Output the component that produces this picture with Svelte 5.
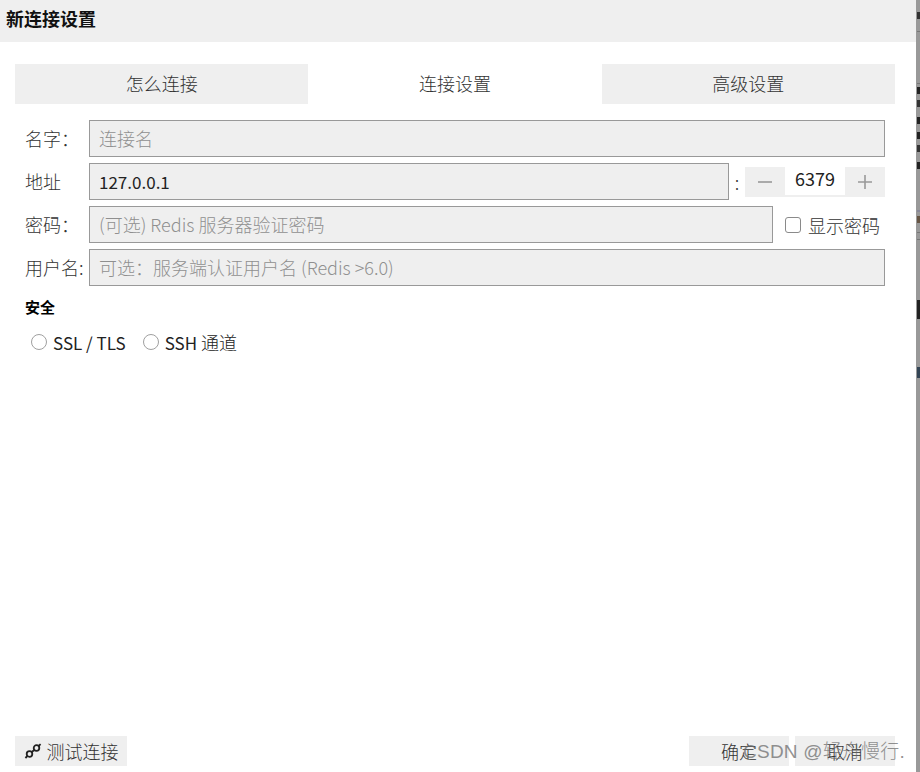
<script>
    let host = "127.0.0.1";
    let port = 6379;
    let showPassword = false;
    const tabs = ["怎么连接", "连接设置", "高级设置"];

    // bits of the window behind that show along the right edge
    const marks = [
        { top: 12, height: 7, color: "#333" },
        { top: 31, height: 1, color: "#777" },
        { top: 83, height: 1, color: "#777" },
        { top: 87, height: 7, color: "#222" },
        { top: 100, height: 7, color: "#333" },
        { top: 117, height: 7, color: "#222" },
        { top: 132, height: 7, color: "#222" },
        { top: 145, height: 7, color: "#333" },
        { top: 162, height: 7, color: "#222" },
        { top: 210, height: 2, color: "#889" },
        { top: 216, height: 7, color: "#654" },
        { top: 232, height: 1, color: "#777" },
        { top: 239, height: 1, color: "#777" },
        { top: 300, height: 19, color: "#222" },
        { top: 367, height: 11, color: "#345" }
    ];
</script>

<div class="page">
    <div class="dialog">
        <header class="title">新连接设置</header>

        <nav class="tabs">
            {#each tabs as tab, i}
                <div class="tab" class:active={i === 1}>{tab}</div>
            {/each}
        </nav>

        <form class="form">
            <div class="row">
                <span class="label">名字：</span>
                <input class="field" placeholder="连接名" />
            </div>
            <div class="row">
                <span class="label">地址</span>
                <input class="field host" bind:value={host} />
                <span class="colon">:</span>
                <div class="spin">
                    <button type="button" class="step" aria-label="减少">
                        <svg width="14" height="14" viewBox="0 0 14 14"><path d="M0 7h14" /></svg>
                    </button>
                    <span class="port">{port}</span>
                    <button type="button" class="step" aria-label="增加">
                        <svg width="14" height="14" viewBox="0 0 14 14"><path d="M0 7h14M7 0v14" /></svg>
                    </button>
                </div>
            </div>
            <div class="row">
                <span class="label">密码：</span>
                <input class="field" placeholder="(可选) Redis 服务器验证密码" />
                <label class="show">
                    <input type="checkbox" bind:checked={showPassword} />
                    <span>显示密码</span>
                </label>
            </div>
            <div class="row">
                <span class="label">用户名:</span>
                <input class="field" placeholder="可选：服务端认证用户名 (Redis >6.0)" />
            </div>

            <div class="section">安全</div>
            <div class="radios">
                <label><input type="radio" name="secure" /><span class="latin">SSL / TLS</span></label>
                <label><input type="radio" name="secure" /><span><span class="latin">SSH</span> 通道</span></label>
            </div>
        </form>

        <footer class="actions">
            <button type="button" class="btn test">
                <svg width="18" height="18" viewBox="0 0 18 18" fill="none" stroke="#222" stroke-width="1.8">
                    <circle cx="5.5" cy="12" r="2.8" />
                    <circle cx="12.5" cy="6" r="2.8" />
                    <path d="M3.4 14L1.4 16M7.6 10.2l2.8 -2.4M14.6 4L16.6 2.2" />
                </svg>
                测试连接
            </button>
            <div class="right">
                <button type="button" class="btn ok">确定</button>
                <button type="button" class="btn cancel">取消</button>
            </div>
            <span class="watermark">CSDN @轻舟慢行.</span>
        </footer>
    </div>
    <div class="edge">
        {#each marks as m}
            <i style="top:{m.top}px;height:{m.height}px;background:{m.color}"></i>
        {/each}
    </div>
</div>

<style>
    :global(body) {
        margin: 0;
        background: #fff;
    }

    .page {
        display: flex;
        width: 920px;
        height: 772px;
        overflow: hidden;
        font-family: "Noto Sans CJK SC", "Liberation Sans", sans-serif;
        font-size: 18px;
        font-weight: 300;
        color: #333;
    }

    .dialog {
        width: 916px;
        display: flex;
        flex-direction: column;
    }

    .edge {
        position: relative;
        width: 4px;
        background: #999;
    }

    .edge i {
        position: absolute;
        left: 1px;
        right: 0;
    }

    .title {
        height: 42px;
        line-height: 36px;
        padding-left: 6px;
        background: #efefef;
        color: #111;
        font-weight: 700;
    }

    .tabs {
        display: flex;
        margin: 22px 21px 0 15px;
    }

    .tab {
        flex: 1;
        height: 40px;
        line-height: 38px;
        text-align: center;
        background: #efefef;
    }

    .tab.active {
        background: #fff;
    }

    .form {
        flex: 1;
        display: flex;
        flex-direction: column;
        gap: 6px;
        padding: 16px 31px 0 25px;
    }

    .row {
        display: flex;
        align-items: center;
        height: 37px;
    }

    .label {
        width: 64px;
        flex: none;
        padding-bottom: 2px;
        white-space: nowrap;
    }

    .field {
        flex: 1;
        min-width: 0;
        height: 37px;
        box-sizing: border-box;
        padding: 0 9px 2px;
        border: 1px solid #999;
        background: #efefef;
        font: inherit;
        color: #222;
        outline: none;
    }

    .field.host {
        font-size: 17px;
        font-weight: 400;
        padding-bottom: 0;
    }

    .field::placeholder {
        color: #8f8f8f;
    }

    .colon {
        width: 16px;
        text-align: center;
    }

    .spin {
        display: flex;
        height: 30px;
        width: 140px;
        background: #efefef;
    }

    .step {
        width: 40px;
        border: none;
        background: none;
        padding: 0;
        display: flex;
        align-items: center;
        justify-content: center;
    }

    .step path {
        stroke: #999;
        stroke-width: 1.6;
        fill: none;
    }

    .port {
        width: 60px;
        height: 28px;
        line-height: 23px;
        text-align: center;
        background: #fff;
        color: #222;
        font-weight: 400;
    }

    .show {
        display: flex;
        align-items: center;
        gap: 7px;
        width: 112px;
        padding-left: 12px;
        box-sizing: border-box;
        white-space: nowrap;
    }

    .show input,
    .radios input {
        appearance: none;
        width: 16px;
        height: 16px;
        margin: 0;
        box-sizing: border-box;
        border: 1px solid #8a8a8a;
        background: #fff;
    }

    .show input {
        border-radius: 3px;
    }

    .section {
        margin-top: 4px;
        font-size: 15px;
        font-weight: 700;
        color: #000;
    }

    .radios {
        display: flex;
        gap: 17px;
        padding-left: 6px;
        margin-top: 6px;
        color: #222;
    }

    .radios label {
        display: flex;
        align-items: center;
        gap: 6px;
    }

    .radios input {
        border-color: #a0a0a0;
        border-radius: 50%;
    }

    .latin {
        font-size: 17px;
        font-weight: 400;
    }

    .actions {
        position: relative;
        display: flex;
        justify-content: space-between;
        margin: 0 21px 6px 15px;
    }

    .right {
        display: flex;
        gap: 6px;
    }

    .btn {
        height: 30px;
        border: none;
        background: #efefef;
        font: inherit;
        color: #333;
        padding: 0;
    }

    .test {
        width: 112px;
        display: flex;
        align-items: center;
        justify-content: center;
        gap: 5px;
    }

    .ok,
    .cancel {
        width: 100px;
    }

    .watermark {
        position: absolute;
        right: -10px;
        top: 0;
        font-size: 19px;
        font-family: "Liberation Sans", "Noto Sans CJK SC", sans-serif;
        letter-spacing: 0.2px;
        color: #666;
        opacity: 0.7;
        white-space: nowrap;
    }
</style>
